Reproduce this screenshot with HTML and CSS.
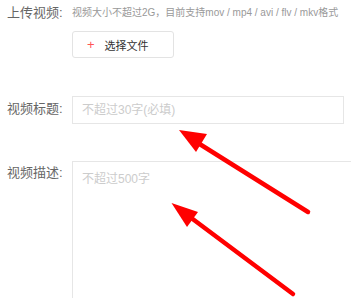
FILE: index.html
```html
<!DOCTYPE html>
<html lang="zh">
<head>
<meta charset="utf-8">
<link rel="stylesheet" href="styles.css">
</head>
<body>
<div class="form">
  <div class="row row-upload">
    <div class="label">上传视频:</div>
    <div class="field">
      <div class="hint">视频大小不超过2G，目前支持mov / mp4 / avi / flv / mkv格式</div>
      <button class="file-btn"><span class="plus">+</span>选择文件</button>
    </div>
  </div>
  <div class="row row-title">
    <div class="label label-mid">视频标题:</div>
    <div class="input">不超过30字(必填)</div>
  </div>
  <div class="row row-desc">
    <div class="label">视频描述:</div>
    <div class="textarea">不超过500字</div>
  </div>
</div>
<svg class="arrows" width="351" height="298" viewBox="0 0 351 298">
  <line x1="308" y1="212" x2="198" y2="143" stroke="#ff0000" stroke-width="4.5" stroke-linecap="round"/>
  <polygon points="179,130 207,134 196,152" fill="#ff0000"/>
  <line x1="293" y1="294" x2="190" y2="217" stroke="#ff0000" stroke-width="4.5" stroke-linecap="round"/>
  <polygon points="171.5,203 198,212 187,227" fill="#ff0000"/>
</svg>
</body>
</html>
```
FILE: styles.css
```css
html, body {
  margin: 0;
  padding: 0;
  background: #fff;
  overflow: hidden;
  width: 351px;
  height: 298px;
}
body {
  position: relative;
  font-family: "Liberation Sans", "Noto Sans CJK SC", sans-serif;
}
.form {
  padding: 4px 0 0 7px;
}
.row {
  display: flex;
  align-items: flex-start;
}
.label {
  width: 65px;
  flex: none;
  font-size: 13px;
  line-height: 18px;
  color: #666;
}
.field {
  display: flex;
  flex-direction: column;
  align-items: flex-start;
}
.hint {
  font-size: 10px;
  line-height: 16px;
  color: #999;
  white-space: nowrap;
  margin-top: 1px;
}
.file-btn {
  margin-top: 10px;
  width: 102px;
  height: 27px;
  border: 1px solid #e3e3e3;
  border-radius: 3px;
  background: #fff;
  padding: 0 0 0 14px;
  display: flex;
  align-items: center;
  font-family: inherit;
  font-size: 11px;
  color: #333;
  box-sizing: border-box;
}
.plus {
  color: #f55;
  font-size: 13px;
  margin-right: 10px;
}
.row-title {
  margin-top: 38px;
  align-items: center;
}
.input {
  width: 272px;
  height: 28px;
  box-sizing: border-box;
  border: 1px solid #e6e6e6;
  padding-left: 9px;
  font-size: 12px;
  line-height: 26px;
  color: #ccc;
}
.row-desc {
  margin-top: 37px;
}
.label-mid {
  margin-top: -2px;
}
.row-desc .label {
  margin-top: 3px;
}
.textarea {
  width: 300px;
  height: 200px;
  flex: none;
  box-sizing: border-box;
  border: 1px solid #e6e6e6;
  padding: 8px 9px;
  font-size: 12px;
  line-height: 18px;
  color: #ccc;
}
.arrows {
  position: absolute;
  left: 0;
  top: 0;
}
```
